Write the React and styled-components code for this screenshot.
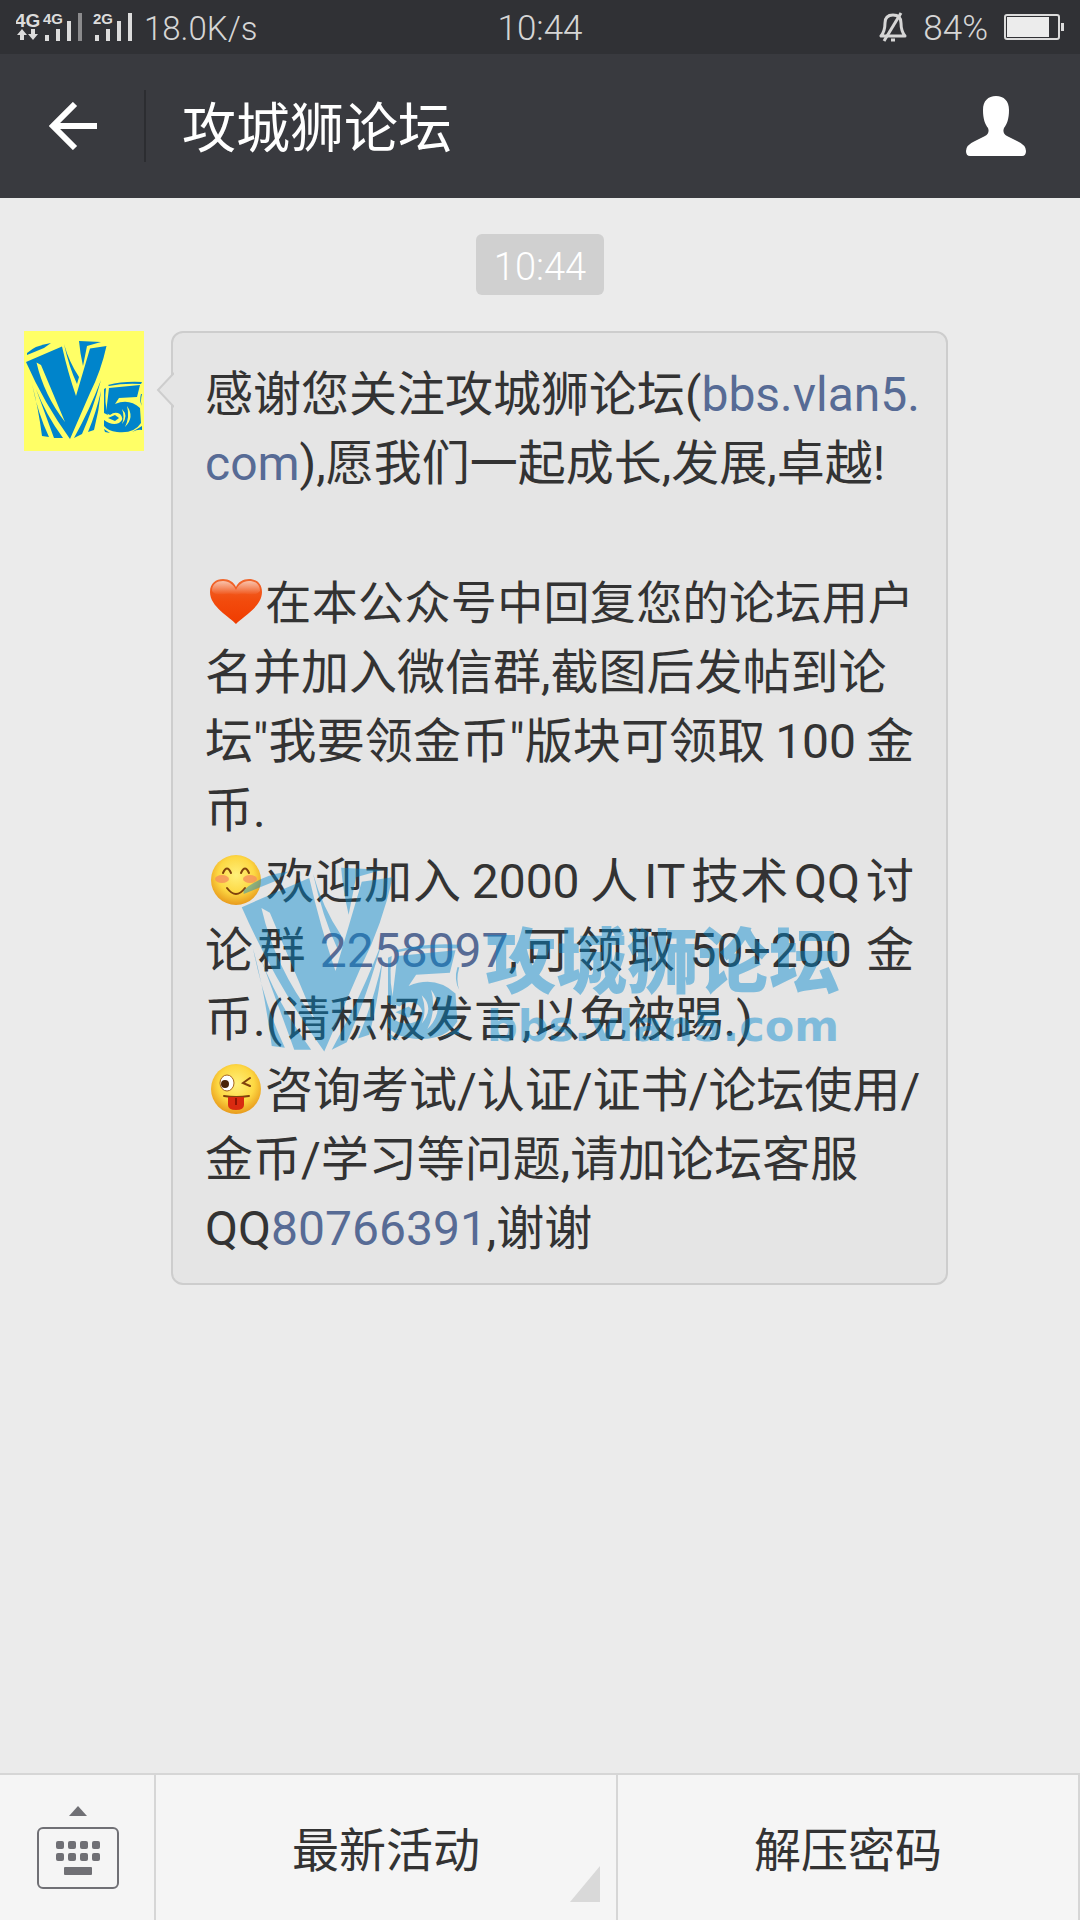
import styled, { createGlobalStyle } from 'styled-components';

const GlobalStyle = createGlobalStyle`
  * {
    box-sizing: border-box;
  }

  body {
    margin: 0;
    background: #ebebeb;
    color: #333;
    font-family: Roboto, "Noto Sans CJK SC", sans-serif;
  }

  button {
    font: inherit;
    color: inherit;
    border: 0;
    padding: 0;
    background: none;
    cursor: pointer;
  }
`;

const Screen = styled.div`
  display: flex;
  flex-direction: column;
  min-height: 100vh;
`;

/* ---------- status bar ---------- */

const StatusBar = styled.div`
  display: grid;
  grid-template-columns: 1fr auto 1fr;
  align-items: center;
  height: 54px;
  padding: 0 16px;
  background: #303135;
  color: #d6d6d6;
  font-size: 35px;
  font-weight: 300;
`;

const StatusText = styled.span`
  padding-top: 3px;
  line-height: 48px;
`;

const Speed = styled(StatusText)`
  font-size: 33px;
`;

const StatusSide = styled.div`
  display: flex;
  align-items: center;
  justify-content: ${({ $end }) => ($end ? 'flex-end' : 'flex-start')};
  gap: ${({ $end }) => ($end ? '16px' : '8px')};
`;

/* ---------- header ---------- */

const Header = styled.header`
  display: flex;
  align-items: center;
  height: 144px;
  background: #393a3f;
  color: #fff;
`;

const IconButton = styled.button`
  display: flex;
  align-items: center;
  justify-content: center;
  width: 144px;
  height: 144px;
`;

const BackButton = styled(IconButton)`
  padding-left: 2px;
`;

const Divider = styled.span`
  width: 2px;
  height: 72px;
  background: #2c2d31;
`;

const Title = styled.h1`
  flex: 1;
  margin: 0;
  padding: 8px 0 0 36px;
  font-size: 54px;
  font-weight: 400;
  line-height: 72px;
`;

const ProfileButton = styled(IconButton)`
  width: 168px;
`;

/* ---------- chat ---------- */

const Chat = styled.main`
  flex: 1;
  display: flex;
  flex-direction: column;
  padding: 36px 132px 36px 24px;
`;

const TimeRow = styled.div`
  display: flex;
  justify-content: center;
  margin-right: -108px;
  margin-bottom: 36px;
`;

const Time = styled.time`
  padding: 8px 18px 2px;
  border-radius: 6px;
  background: #d0d0d0;
  color: #fff;
  font-size: 38px;
  font-weight: 300;
  line-height: 51px;
`;

const MessageRow = styled.div`
  display: flex;
  align-items: flex-start;
  gap: 27px;
`;

const Avatar = styled.div`
  display: flex;
  flex: none;
  width: 120px;
  height: 120px;
  background: #ffff66;
  color: #0084cb;
`;

const Bubble = styled.article`
  position: relative;
  flex: 1;
  min-width: 0;
  padding: 27px 32px 20px 32px;
  border: 2px solid #cdcdcd;
  border-radius: 12px;
  background: #e5e5e5;
`;

const Tail = styled.svg`
  position: absolute;
  top: 38px;
  left: -17px;
`;

const Message = styled.div`
  display: grid;
  grid-template-columns: minmax(0, 1fr);
  gap: 2px;
  font-size: 48px;
  line-height: 69px;
`;

const Paragraph = styled.p`
  margin: 0;
`;

const Line = styled.span`
  display: block;
  height: 69px;
  white-space: nowrap;
  font-size: ${({ $dense }) => ($dense ? '46px' : '48px')};
  text-align-last: ${({ $full }) => ($full ? 'justify' : 'left')};
`;

const Link = styled.a`
  color: #576b95;
  text-decoration: none;
`;

const Emoji = styled.svg`
  width: 52px;
  height: 52px;
  margin: 0 3px 0 5px;
  vertical-align: -9px;
`;

const Watermark = styled.div`
  position: absolute;
  top: 516px;
  left: 65px;
  display: flex;
  align-items: center;
  gap: 22px;
  color: #0088cf;
  opacity: 0.44;
  pointer-events: none;
`;

const WatermarkText = styled.div`
  display: flex;
  flex-direction: column;
  padding-top: 40px;
  white-space: nowrap;
`;

const WatermarkName = styled.span`
  font-family: "Noto Sans CJK SC", sans-serif;
  font-size: 71px;
  font-weight: 900;
  line-height: 88px;
`;

const WatermarkUrl = styled.span`
  padding-left: 2px;
  font-family: "DejaVu Sans", sans-serif;
  font-size: 43px;
  font-weight: 700;
  line-height: 52px;
`;

/* ---------- bottom menu ---------- */

const Menu = styled.nav`
  display: flex;
  height: 147px;
  border-top: 2px solid #d6d6d6;
  background: #f5f5f5;
`;

const KeyboardButton = styled.button`
  display: flex;
  justify-content: center;
  width: 156px;
  padding: 30px 0 0 2px;
  border-right: 2px solid #d6d6d6;
`;

const MenuButton = styled.button`
  position: relative;
  flex: 1;
  padding-bottom: 3px;
  border-right: 2px solid #d6d6d6;
  font-size: 47px;
`;

const Corner = styled.svg`
  position: absolute;
  right: 16px;
  bottom: 18px;
`;

/* ---------- drawings ---------- */

const Logo = ({ size }) => (
  <svg width={size} height={size} viewBox="0 0 120 120" fill="currentColor" fillRule="evenodd" aria-hidden="true">
    <path d="M2 31 L38 15.5 Q44 42 52 65 L66 17.5 L82.5 15 Q77 40 66 62 L46 108 Q20 72 2 31Z M12.5 31.5 Q20 64 41 91 L17 34Z" />
    <path d="M3 22 Q12 14 27 12 L20 17 L3 24Z" />
    <path d="M40 13 Q45 31 55 46 L53 53 Q45 36 40 13Z" />
    <path d="M55 10 L77 11 L63 15 L59 35 Q56 22 55 10Z" />
    <path d="M8 53 Q14 83 25 106 L18 105 Q14 75 8 53Z" />
    <path d="M12 58 Q22 84 39 107 L30 107 Q22 85 12 58Z" />
    <path d="M77 49 Q69 78 58 103 L50 107 Q66 78 77 49Z" />
    <path d="M77 60 Q75 80 70 99 L64 101 Q72 82 77 60Z" />
    <path d="M84 54 Q99 50 118 51 L117 53 Q99 52 85 55Z" />
    <path d="M80 58 L82 57 Q80 72 84 84 L80 82Z" />
    <path d="M85 57 L116 54 L113 66 L95 67 L91 73 Q105 67 116 77 L117 92 Q110 103 93 101 Q84 100 80 95 L80 89 Q88 95 95 92 Q101 88 96 83 Q91 80 86 84 L82 82Z M103 75 Q111 86 101 96 Q106 86 103 75Z M98 78 Q105 85 98 93 Q101 86 98 78Z" />
    <path d="M84 87 L91 84 L95 87 L91 90Z" />
    <path d="M117 63 Q115 70 118 75 Q116 70 118 63Z" />
    <path d="M108 101 L118 95 L118 99 Q114 98 108 101Z" />
    <path d="M80 98 L86 102 L81 101Z" />
  </svg>
);

const Signal = () => (
  <svg width="120" height="54" viewBox="16 0 120 54" fill="#dcdcdc" role="img" aria-label="4G 2G">
    <g fontFamily="Liberation Sans, sans-serif" fontWeight="700">
      <text x="15" y="27" fontSize="19">4G</text>
      <text x="43" y="24" fontSize="15">4G</text>
      <text x="93" y="24" fontSize="15">2G</text>
    </g>
    <path d="M22 29l5 6h-3v5h-4v-5h-3z M33 40l-5-6h3v-5h4v5h3z" />
    <path d="M45 35h4v6h-4z M56 29h4v12h-4z M67 21h4v20h-4z" />
    <path d="M78 13h4v28h-4z" fill="#8b8b8d" />
    <path d="M95 35h4v6h-4z M106 29h4v12h-4z M117 21h4v20h-4z M128 13h4v28h-4z" />
  </svg>
);

const MutedBell = () => (
  <svg width="28" height="30" viewBox="0 0 28 30" fill="none" stroke="#d6d6d6" strokeWidth="3" role="img" aria-label="静音">
    <path d="M2 24H26Q22 19 22 11Q22 3 14 3Q6 3 6 11Q6 19 2 24Z" strokeLinejoin="round" />
    <path d="M22 1L5 29" />
    <path d="M12 28h4" />
  </svg>
);

const Battery = () => (
  <svg width="60" height="26" viewBox="0 0 60 26" role="img" aria-label="电量">
    <rect x="1" y="1" width="54" height="24" rx="2" fill="none" stroke="#dcdcdc" strokeWidth="2" />
    <path d="M3 3h42v20h-42z" fill="#ececec" />
    <path d="M57 9h3v8h-3z" fill="#dcdcdc" />
  </svg>
);

const BackArrow = () => (
  <svg width="48" height="48" viewBox="0 0 48 48" fill="none" stroke="#fff" strokeWidth="6" aria-hidden="true">
    <path d="M26 2L4 24L26 46 M4 24H48" />
  </svg>
);

const Person = () => (
  <svg width="60" height="60" viewBox="0 0 60 60" fill="#fff" aria-hidden="true">
    <path d="M30 0C38 0 43 5 43 14C43 23 41 28 38 32Q36 37 41 40L51 45Q60 49 60 55Q60 60 56 60H4Q0 60 0 55Q0 49 9 45L19 40Q24 37 22 32C19 28 17 23 17 14C17 5 22 0 30 0Z" />
  </svg>
);

const Heart = () => (
  <Emoji viewBox="0 0 52 52" role="img" aria-label="爱心">
    <defs>
      <linearGradient id="heart" x1="0" y1="0" x2="0" y2="1">
        <stop offset="0" stopColor="#f0682f" />
        <stop offset="0.5" stopColor="#f24a0c" />
        <stop offset="1" stopColor="#f03c00" />
      </linearGradient>
      <linearGradient id="heartShine" x1="0" y1="0" x2="0" y2="1">
        <stop offset="0" stopColor="#fff" stopOpacity="0.6" />
        <stop offset="1" stopColor="#fff" stopOpacity="0" />
      </linearGradient>
    </defs>
    <path d="M26 48C20 41 0 31 0 16C0 7 6 3 13 3C19 3 24 6 26 11C28 6 33 3 39 3C46 3 52 7 52 16C52 31 32 41 26 48Z" fill="url(#heart)" />
    <path d="M2 15C2 8 7 5 13 5C19 5 24 9 26 14C28 9 33 5 39 5C45 5 50 8 50 15C45 22 34 15 26 19C18 15 7 22 2 15Z" fill="url(#heartShine)" />
  </Emoji>
);

const FaceFill = ({ id }) => (
  <>
    <defs>
      <radialGradient id={id} cx="0.5" cy="0.4" r="0.6">
        <stop offset="0" stopColor="#fff07a" />
        <stop offset="0.6" stopColor="#fdd843" />
        <stop offset="1" stopColor="#e89a1c" />
      </radialGradient>
    </defs>
    <circle cx="26" cy="25" r="25" fill={`url(#${id})`} />
  </>
);

const Smile = () => (
  <Emoji viewBox="0 0 52 52" role="img" aria-label="微笑">
    <FaceFill id="smileFace" />
    <ellipse cx="12" cy="24" rx="7" ry="4" fill="#f5905c" opacity="0.8" />
    <ellipse cx="40" cy="24" rx="7" ry="4" fill="#f5905c" opacity="0.8" />
    <path d="M13 18Q17 9 21 18 M31 18Q35 9 39 18 M17 33Q26 45 35 33" fill="none" stroke="#80420c" strokeWidth="2" strokeLinecap="round" />
  </Emoji>
);

const Wink = () => (
  <Emoji viewBox="0 0 52 52" role="img" aria-label="吐舌">
    <FaceFill id="winkFace" />
    <ellipse cx="17" cy="19" rx="7" ry="8" fill="#fff" stroke="#a8641c" strokeWidth="1" />
    <circle cx="15" cy="20" r="4" fill="#4a2408" />
    <path d="M40 14L33 19L40 22" fill="none" stroke="#80420c" strokeWidth="2" strokeLinecap="round" />
    <path d="M14 32Q26 34 39 32" fill="none" stroke="#80420c" strokeWidth="2" strokeLinecap="round" />
    <path d="M18 33H34V41Q34 46 26 46Q18 46 18 41Z" fill="#d92a10" />
    <path d="M26 34V41" stroke="#8e1404" strokeWidth="2" />
  </Emoji>
);

const Keyboard = () => (
  <svg width="82" height="84" viewBox="37 1805 82 84" fill="#707075" aria-hidden="true">
    <path d="M69 1816L78 1806L87 1816Z" />
    <rect x="38" y="1828" width="80" height="60" rx="5" fill="none" stroke="#707075" strokeWidth="2" />
    {[1841, 1853].map((y) =>
      [56, 68, 80, 92].map((x) => <rect key={`${x}-${y}`} x={x} y={y} width="8" height="8" rx="2" />)
    )}
    <rect x="64" y="1867" width="28" height="8" rx="1" />
  </svg>
);

// hair space between Latin words and Chinese characters
const hair = '\u200A';

const App = () => {
  return (
    <Screen>
      <GlobalStyle />

      <StatusBar>
        <StatusSide>
          <Signal />
          <Speed>18.0K/s</Speed>
        </StatusSide>
        <StatusText>10:44</StatusText>
        <StatusSide $end>
          <MutedBell />
          <StatusText>84%</StatusText>
          <Battery />
        </StatusSide>
      </StatusBar>

      <Header>
        <BackButton type="button" aria-label="返回">
          <BackArrow />
        </BackButton>
        <Divider />
        <Title>攻城狮论坛</Title>
        <ProfileButton type="button" aria-label="公众号资料">
          <Person />
        </ProfileButton>
      </Header>

      <Chat>
        <TimeRow>
          <Time>10:44</Time>
        </TimeRow>

        <MessageRow>
          <Avatar>
            <Logo size={120} />
          </Avatar>

          <Bubble>
            <Tail width="18" height="38" viewBox="0 0 18 38" aria-hidden="true">
              <path d="M18 2L2 19L18 36" fill="#e5e5e5" stroke="#cdcdcd" strokeWidth="2" />
            </Tail>

            <Message>
              <Paragraph>
                <Line $full>感谢您关注攻城狮论坛(<Link href="#bbs">bbs.vlan5.</Link></Line>
                <Line><Link href="#bbs">com</Link>),愿我们一起成长,发展,卓越!</Line>
                <Line />
              </Paragraph>
              <Paragraph>
                <Line $full $dense><Heart />在本公众号中回复您的论坛用户</Line>
                <Line>名并加入微信群,截图后发帖到论</Line>
                <Line $full>坛"我要领金币"版块可领取&thinsp;100&thinsp;金</Line>
                <Line>币.</Line>
              </Paragraph>
              <Paragraph>
                <Line $full><Smile />欢迎加入&thinsp;2000&thinsp;人{hair}IT{hair}技术{hair}QQ{hair}讨</Line>
                <Line $full>论群&thinsp;<Link href="#qq-group">2258097</Link>,可领取&thinsp;50+200&thinsp;金</Line>
                <Line>币.(请积极发言,以免被踢.)</Line>
              </Paragraph>
              <Paragraph>
                <Line $full><Wink />咨询考试/认证/证书/论坛使用/</Line>
                <Line>金币/学习等问题,请加论坛客服</Line>
                <Line>QQ<Link href="#qq-service">80766391</Link>,谢谢</Line>
              </Paragraph>
            </Message>

            <Watermark aria-hidden="true">
              <Logo size={225} />
              <WatermarkText>
                <WatermarkName>攻城狮论坛</WatermarkName>
                <WatermarkUrl>bbs.vlan5.com</WatermarkUrl>
              </WatermarkText>
            </Watermark>
          </Bubble>
        </MessageRow>
      </Chat>

      <Menu>
        <KeyboardButton type="button" aria-label="切换键盘">
          <Keyboard />
        </KeyboardButton>
        <MenuButton type="button">
          最新活动
          <Corner width="30" height="36" viewBox="0 0 30 36" aria-hidden="true">
            <path d="M30 0V36H0Z" fill="#d9d9d9" />
          </Corner>
        </MenuButton>
        <MenuButton type="button">解压密码</MenuButton>
      </Menu>
    </Screen>
  );
};

export default App;
